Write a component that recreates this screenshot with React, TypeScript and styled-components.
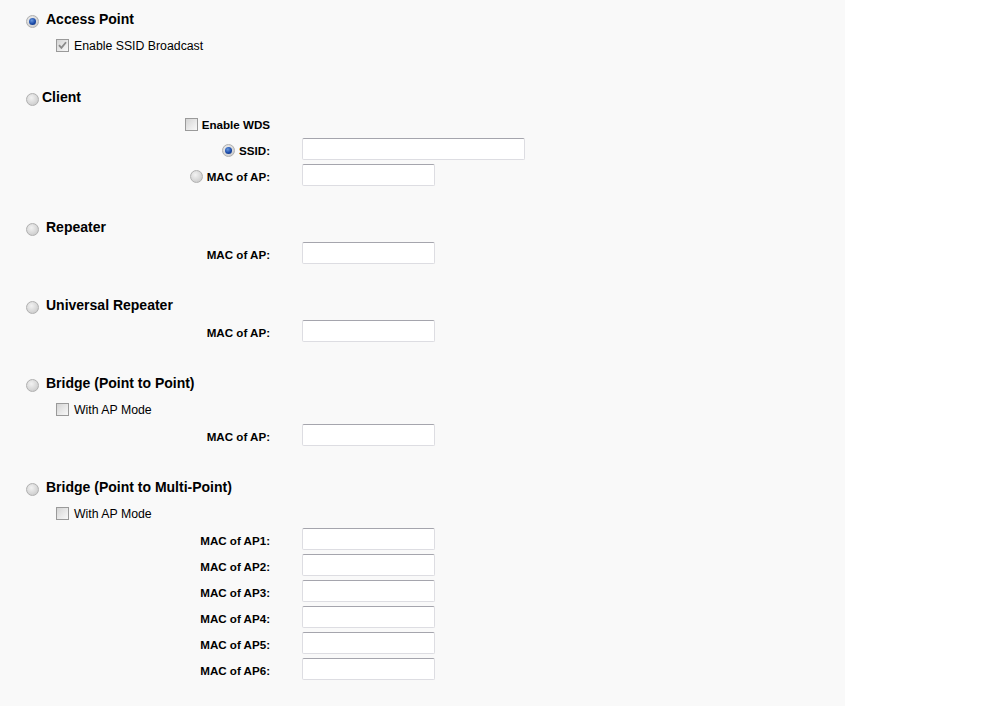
import React from 'react';
import styled, { createGlobalStyle } from 'styled-components';

const GlobalStyle = createGlobalStyle`
  html, body {
    margin: 0;
    padding: 0;
    background: #ffffff;
  }
  body {
    font-family: "Liberation Sans", Arial, sans-serif;
    color: #000000;
  }
`;

interface IField {
  label: string;
  wide?: boolean;
  radio?: boolean;
  checked?: boolean;
}

interface ISection {
  title: string;
  checked?: boolean;
  tight?: boolean;
  option?: { text: string; checked?: boolean };
  boldOption?: string;
  fields: IField[];
}

const sections: ISection[] = [
  {
    title: 'Access Point',
    checked: true,
    option: { text: 'Enable SSID Broadcast', checked: true },
    fields: [],
  },
  {
    title: 'Client',
    tight: true,
    boldOption: 'Enable WDS',
    fields: [
      { label: 'SSID:', wide: true, radio: true, checked: true },
      { label: 'MAC of AP:', radio: true },
    ],
  },
  { title: 'Repeater', fields: [{ label: 'MAC of AP:' }] },
  { title: 'Universal Repeater', fields: [{ label: 'MAC of AP:' }] },
  {
    title: 'Bridge (Point to Point)',
    option: { text: 'With AP Mode' },
    fields: [{ label: 'MAC of AP:' }],
  },
  {
    title: 'Bridge (Point to Multi-Point)',
    option: { text: 'With AP Mode' },
    fields: [1, 2, 3, 4, 5, 6].map((n) => ({ label: `MAC of AP${n}:` })),
  },
];

export default function App() {
  return (
    <>
      <GlobalStyle />
      <Panel>
        {sections.map((s) => (
          <Section key={s.title}>
            <Row>
              <HeadRadio checked={!!s.checked} />
              <Title tight={!!s.tight}>{s.title}</Title>
            </Row>
            {s.option && (
              <Row indent>
                <Check checked={!!s.option.checked} />
                <OptionText>{s.option.text}</OptionText>
              </Row>
            )}
            {s.boldOption && (
              <Row>
                <LabelCell>
                  <Check checked={false} />
                  <BoldLabel gap={4}>{s.boldOption}</BoldLabel>
                </LabelCell>
              </Row>
            )}
            {s.fields.map((f) => (
              <Row key={f.label}>
                <LabelCell>
                  {f.radio && <SmallRadio checked={!!f.checked} />}
                  <BoldLabel gap={f.radio ? 4 : 0}>{f.label}</BoldLabel>
                </LabelCell>
                <TextInput wide={!!f.wide} />
              </Row>
            ))}
          </Section>
        ))}
      </Panel>
    </>
  );
}

const Radio = ({ checked, className }: { checked: boolean; className?: string }) => (
  <RadioStyled className={className} checked={checked}>
    {checked && <RadioDot />}
  </RadioStyled>
);

const Check = ({ checked }: { checked: boolean }) => (
  <CheckStyled>
    {checked && (
      <svg width="9" height="9" viewBox="0 0 9 9">
        <path d="M1 4.2 L3.4 6.8 L8 1.2" fill="none" stroke="#8a8a8a" strokeWidth="1.8" />
      </svg>
    )}
  </CheckStyled>
);

const Panel = styled.div`
  width: 845px;
  min-height: 706px;
  box-sizing: border-box;
  background: #f9f9f9;
  padding-top: 6px;
`;

const Section = styled.div`
  display: flex;
  flex-direction: column;
  margin-bottom: 26px;
`;

const Row = styled.div<{ indent?: boolean }>`
  display: flex;
  align-items: center;
  height: 26px;
  padding-left: ${({ indent }) => (indent ? '56px' : '26px')};
`;

const RadioStyled = styled.span<{ checked: boolean }>`
  box-sizing: border-box;
  display: inline-flex;
  align-items: center;
  justify-content: center;
  width: 13px;
  height: 13px;
  border-radius: 50%;
  border: 1px solid #b0b0b0;
  background: radial-gradient(circle at 40% 35%, #f2f2f2 0%, #d6d6d6 60%, #c2c2c2 100%);
  flex-shrink: 0;
`;

const RadioDot = styled.span`
  width: 7px;
  height: 7px;
  border-radius: 50%;
  background: radial-gradient(circle at 40% 35%, #6a9ae0 0%, #1a4aa8 55%, #0b2a6e 100%);
`;

const HeadRadio = styled(Radio)`
  margin-top: 4px;
`;

const SmallRadio = styled(Radio)`
  margin-top: 1px;
`;

const Title = styled.span<{ tight: boolean }>`
  margin-left: ${({ tight }) => (tight ? '3px' : '7px')};
  font-size: 14px;
  font-weight: 700;
`;

const CheckStyled = styled.span`
  box-sizing: border-box;
  display: inline-flex;
  align-items: center;
  justify-content: center;
  width: 13px;
  height: 13px;
  border: 1px solid #9a9a9a;
  background: linear-gradient(135deg, #d4d4d4 0%, #ebebeb 60%, #f8f8f8 100%);
  flex-shrink: 0;
`;

const OptionText = styled.span`
  margin-left: 5px;
  padding-top: 2px;
  font-size: 12.3px;
`;

const LabelCell = styled.div`
  box-sizing: border-box;
  width: 244px;
  padding-top: 2px;
  display: flex;
  align-items: center;
  justify-content: flex-end;
`;

const BoldLabel = styled.span<{ gap: number }>`
  margin-left: ${({ gap }) => gap}px;
  font-size: 11.6px;
  font-weight: 700;
`;

const TextInput = styled.div<{ wide: boolean }>`
  box-sizing: border-box;
  margin-left: 32px;
  width: ${({ wide }) => (wide ? '223px' : '133px')};
  height: 22px;
  background: #ffffff;
  border: 1px solid #dddde2;
  border-top-color: #a5a5ad;
  border-radius: 2px;
`;
